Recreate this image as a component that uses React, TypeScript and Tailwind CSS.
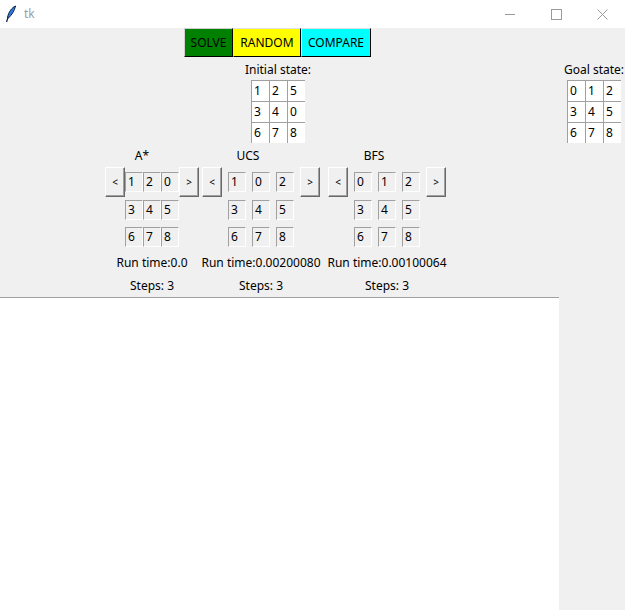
import React from "react";

type Panel = {
  name: string;
  gap: string;
  cellsPad: string;
  board: string[];
  time: string;
  steps: number;
  className: string;
};

const panels: Panel[] = [
  {
    name: "A*",
    gap: "gap-x-0",
    cellsPad: "pl-[20px]",
    board: ["1", "2", "0", "3", "4", "5", "6", "7", "8"],
    time: "0.0",
    steps: 3,
    className: "w-[94px]",
  },
  {
    name: "UCS",
    gap: "gap-x-[6px]",
    cellsPad: "pl-[26px]",
    board: ["1", "0", "2", "3", "4", "5", "6", "7", "8"],
    time: "0.00200080",
    steps: 3,
    className: "ml-[3px] w-[118px]",
  },
  {
    name: "BFS",
    gap: "gap-x-[6px]",
    cellsPad: "pl-[26px]",
    board: ["0", "1", "2", "3", "4", "5", "6", "7", "8"],
    time: "0.00100064",
    steps: 3,
    className: "ml-[8px] w-[118px]",
  },
];

function Feather() {
  return (
    <svg width="12" height="18" viewBox="0 0 12 18" aria-hidden="true">
      <path
        d="M10.5 1 C7 2.5 3.5 7 2.5 12.5 L3.5 13 C6.5 10 9.5 6 10.5 1 Z"
        fill="#2f7de1"
        stroke="#0a1a3a"
        strokeWidth="1"
      />
      <path d="M3 12.5 L1.5 17" stroke="#0a1a3a" strokeWidth="1.2" />
    </svg>
  );
}

function TitleBar() {
  return (
    <div className="flex h-[28px] shrink-0 items-center bg-white">
      <div className="ml-[4px] flex w-[14px] justify-center">
        <Feather />
      </div>
      <span className="ml-[6px] text-[12px] text-[#a0a0a0]">tk</span>
      <div className="ml-auto flex h-full items-center">
        <div className="flex w-[46px] justify-center">
          <svg width="11" height="11" viewBox="0 0 11 11" aria-hidden="true">
            <path d="M0 5.5 H10" stroke="#9a9a9a" strokeWidth="1" />
          </svg>
        </div>
        <div className="flex w-[46px] justify-center">
          <svg width="11" height="11" viewBox="0 0 11 11" aria-hidden="true">
            <rect x="0.5" y="0.5" width="10" height="10" fill="none" stroke="#9a9a9a" strokeWidth="1" />
          </svg>
        </div>
        <div className="flex w-[46px] justify-center">
          <svg width="11" height="11" viewBox="0 0 11 11" aria-hidden="true">
            <path d="M0.5 0.5 L10.5 10.5 M10.5 0.5 L0.5 10.5" stroke="#9a9a9a" strokeWidth="1" />
          </svg>
        </div>
      </div>
    </div>
  );
}

function StateCell({ value, white }: { value: string; white?: boolean }) {
  return (
    <div
      className={`flex items-center border-t border-l border-[#a0a0a0] pl-[2px] text-[12px] text-black ${
        white ? "h-[21px] w-[18px] bg-white" : "h-[20px] w-[18px] bg-[#f0f0f0] border-r border-b border-r-white border-b-white"
      }`}
    >
      {value}
    </div>
  );
}

function ArrowButton({ label }: { label: string }) {
  return (
    <button
      type="button"
      className="flex h-[30px] w-[20px] items-center justify-center border border-t-white border-l-white border-b-[#696969] border-r-[#696969] bg-[#f0f0f0] text-[10px] text-black shadow-[inset_-1px_-1px_0_#a0a0a0]"
    >
      {label}
    </button>
  );
}

function AlgoPanel({ panel }: { panel: Panel }) {
  const row = (i: number) => panel.board.slice(i * 3, i * 3 + 3);
  return (
    <div className={`flex shrink-0 flex-col ${panel.className}`}>
      <div
        className={`flex h-[24px] items-center justify-center pt-[2px] text-[12px] ${
          panel.name === "A*" ? "w-[74px]" : "w-[92px]"
        }`}
      >
        {panel.name}
      </div>
      <div className={`flex h-[30px] items-center ${panel.gap}`}>
        <ArrowButton label="<" />
        {row(0).map((v, i) => (
          <StateCell key={i} value={v} />
        ))}
        <ArrowButton label=">" />
      </div>
      <div className={`mt-[3px] flex ${panel.gap} ${panel.cellsPad}`}>
        {row(1).map((v, i) => (
          <StateCell key={i} value={v} />
        ))}
      </div>
      <div className={`mt-[7px] flex ${panel.gap} ${panel.cellsPad}`}>
        {row(2).map((v, i) => (
          <StateCell key={i} value={v} />
        ))}
      </div>
      <div className="mt-[5px] flex h-[22px] items-center justify-center whitespace-nowrap text-[12px]">
        Run time:{panel.time}
      </div>
      <div className="flex h-[23px] items-center justify-center whitespace-nowrap text-[12px]">
        Steps: {panel.steps}
      </div>
    </div>
  );
}

function Board({ values }: { values: string[] }) {
  return (
    <div className="grid grid-cols-[18px_18px_18px]">
      {values.map((v, i) => (
        <StateCell key={i} value={v} white />
      ))}
    </div>
  );
}

export default function App() {
  return (
    <div className="flex h-[610px] w-[625px] flex-col overflow-hidden bg-[#f0f0f0] font-['Noto_Sans',sans-serif] text-black">
      <TitleBar />

      <div className="flex h-[29px] shrink-0 pl-[184px] text-[12px]">
        <button
          type="button"
          className="w-[49px] border border-t-[#d0d0d0] border-l-[#d0d0d0] border-b-black border-r-black bg-[#008000]"
        >
          SOLVE
        </button>
        <button
          type="button"
          className="w-[68px] border border-t-[#e0e0e0] border-l-[#e0e0e0] border-b-black border-r-black bg-[#ffff00]"
        >
          RANDOM
        </button>
        <button
          type="button"
          className="w-[70px] border border-t-[#e0e0e0] border-l-[#e0e0e0] border-b-black border-r-black bg-[#00ffff]"
        >
          COMPARE
        </button>
      </div>

      <div className="flex h-[86px] shrink-0">
        <div className="ml-[228px] flex w-[100px] shrink-0 flex-col items-center">
          <div className="flex h-[24px] items-center whitespace-nowrap pt-[2px] text-[12px]">Initial state:</div>
          <Board values={["1", "2", "5", "3", "4", "0", "6", "7", "8"]} />
        </div>
        <div className="ml-[226px] flex w-[80px] shrink-0 flex-col items-center">
          <div className="flex h-[24px] items-center whitespace-nowrap pt-[2px] text-[12px]">Goal state:</div>
          <Board values={["0", "1", "2", "3", "4", "5", "6", "7", "8"]} />
        </div>
      </div>

      <div className="flex shrink-0 pl-[105px]">
        {panels.map((p) => (
          <AlgoPanel key={p.name} panel={p} />
        ))}
      </div>

      <div className="flex flex-1">
        <div className="w-[559px] border-t border-[#a0a0a0] bg-white" />
      </div>
    </div>
  );
}
